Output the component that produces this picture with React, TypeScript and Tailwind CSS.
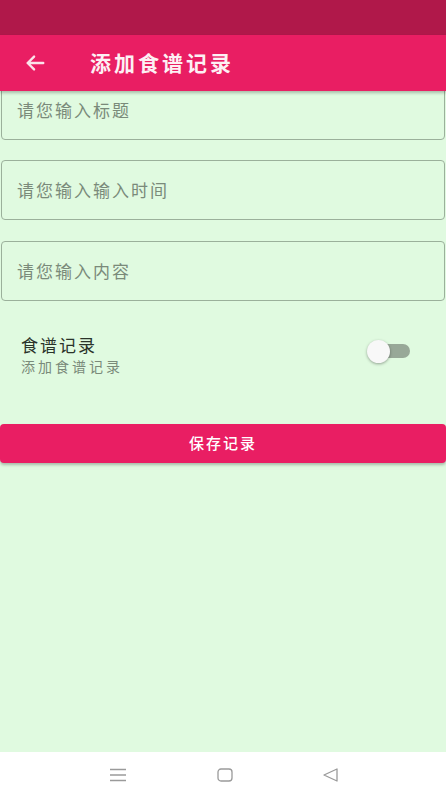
import React from 'react';

const font = { fontFamily: '"Noto Sans CJK SC", "Noto Sans", sans-serif' };

const InputBox: React.FC<{ placeholder: string; className?: string }> = ({ placeholder, className = '' }) => (
  <div className={`mx-px h-[60px] rounded-[4px] border border-[#9bb09b] flex items-center px-[15px] ${className}`}>
    <span className="text-[17px] tracking-[2px] text-[#7a8a7a]">{placeholder}</span>
  </div>
);

export default function App() {
  return (
    <div className="w-[446px] h-[796px] bg-[#e0fae0] flex flex-col overflow-hidden" style={font}>
      {/* status bar */}
      <div className="h-[35px] bg-[#b0184a] shrink-0" />

      {/* toolbar */}
      <div className="relative z-10 h-[56px] bg-[#e91e63] flex items-center shrink-0 shadow-[0_2px_3px_rgba(0,0,0,0.25)]">
        <svg className="ml-[24px] w-[22px] h-[22px]" viewBox="0 0 24 24" fill="none" stroke="#fbe3ea" strokeWidth="2.6" strokeLinecap="round" strokeLinejoin="round">
          <path d="M21 12H4M11 5l-7 7 7 7" />
        </svg>
        <span className="ml-[44px] text-[21px] font-bold text-[#fdf0f4] tracking-[3px]">添加食谱记录</span>
      </div>

      {/* form */}
      <div className="flex-1 flex flex-col">
        <InputBox placeholder="请您输入标题" className="-mt-[11px]" />
        <InputBox placeholder="请您输入输入时间" className="mt-[20px]" />
        <InputBox placeholder="请您输入内容" className="mt-[21px]" />

        <div className="mt-[34px] flex items-center justify-between pl-[21px] pr-[36px]">
          <div className="flex flex-col gap-[2px]">
            <span className="text-[17px] leading-[20px] tracking-[2px] text-[#2a332a]">食谱记录</span>
            <span className="text-[14px] leading-[18px] tracking-[3px] text-[#7a8a7a]">添加食谱记录</span>
          </div>
          <div className="relative w-[43px] h-[24px] flex items-center -mt-[8px]">
            <div className="absolute left-[10px] right-0 h-[14px] rounded-full bg-[#98a898]" />
            <div className="absolute left-0 w-[23px] h-[23px] rounded-full bg-[#f8f8f8] shadow-[0_1px_3px_rgba(0,0,0,0.35)]" />
          </div>
        </div>

        <button className="mt-[49px] h-[39px] w-full rounded-[4px] bg-[#e91e63] text-white text-[15px] tracking-[2px] font-medium shadow-[0_2px_3px_rgba(0,0,0,0.25)]">
          保存记录
        </button>
      </div>

      {/* navigation bar */}
      <div className="h-[44px] bg-white shrink-0 flex items-center justify-center gap-[90px] pt-px">
        <svg className="w-[18px] h-[14px]" viewBox="0 0 18 14" stroke="#9a9a9a" strokeWidth="1.3">
          <path d="M1 1.5h16M1 7h16M1 12.5h16" />
        </svg>
        <svg className="w-[16px] h-[14px]" viewBox="0 0 16 14" fill="none" stroke="#9a9a9a" strokeWidth="1.3">
          <rect x="1" y="1" width="14" height="12" rx="3" />
        </svg>
        <svg className="w-[15px] h-[14px]" viewBox="0 0 15 14" fill="none" stroke="#9a9a9a" strokeWidth="1.3" strokeLinejoin="round">
          <path d="M14 1L1 7l13 6z" />
        </svg>
      </div>
    </div>
  );
}
